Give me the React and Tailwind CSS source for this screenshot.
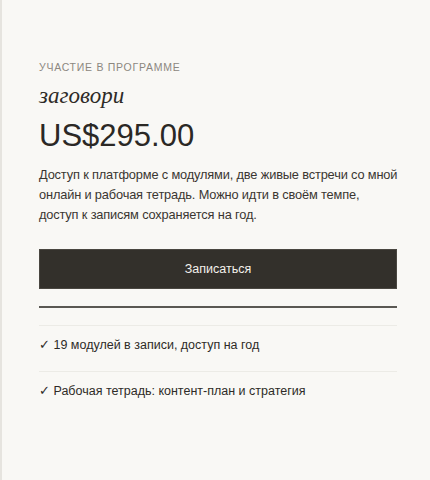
export default function App() {
  const items = [
    '19 модулей в записи, доступ на год',
    'Рабочая тетрадь: контент-план и стратегия',
  ];

  return (
    <div className="min-h-[480px] bg-[#f9f8f5] border-l-2 border-[#e6e4df] pl-[37px] pr-[33px] pt-[59px] font-['Liberation_Sans',Arial,sans-serif] text-[#2e2b27]">
      <p className="text-[10.5px] leading-4 tracking-[0.07em] uppercase text-[#8c8780]">
        Участие в программе
      </p>
      <h2 className="mt-[7px] font-['Liberation_Serif',serif] italic text-[23px] leading-7 text-[#2e2b27]">
        заговори
      </h2>
      <div className="mt-[6px] text-[31px] leading-10 text-[#2b2825]">US$295.00</div>
      <p className="mt-[9px] whitespace-nowrap text-[12.8px] tracking-[-0.012em] leading-5 text-[#3a3631]">
        Доступ к платформе с модулями, две живые встречи со мной
        <br />
        онлайн и рабочая тетрадь. Можно идти в своём темпе,
        <br />
        доступ к записям сохраняется на год.
      </p>
      <button
        type="button"
        className="mt-[24px] w-full h-10 bg-[#33302b] border border-[#4a4741] text-[12.5px] text-[#f3f1ec]"
      >
        Записаться
      </button>
      <div className="mt-[17px] border-t-2 border-[#5a5853]" />
      <ul className="mt-[17px]">
        {items.map((item) => (
          <li
            key={item}
            className="border-t border-[#ecebe6] pt-[9px] pb-[16px] text-[12.5px] leading-5 text-[#2e2b27]"
          >
            ✓ {item}
          </li>
        ))}
      </ul>
    </div>
  );
}
